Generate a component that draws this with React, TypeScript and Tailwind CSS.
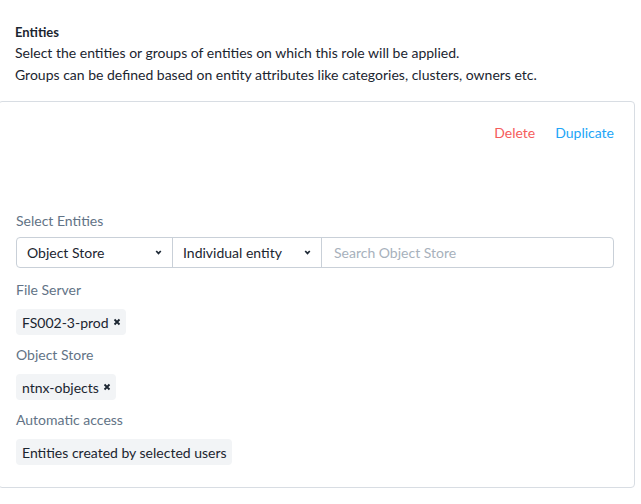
import React from 'react'

const Chevron = () => (
  <svg width='7' height='5' viewBox='0 0 7 5' className='shrink-0'>
    <path d='M1.2 1 L3.5 3.4 L5.8 1' fill='none' stroke='#1f2a37' strokeWidth='1.7' />
  </svg>
)

const Tag = ({ label, removable = true }: { label: string; removable?: boolean }) => (
  <div className='flex'>
    <div className='h-[26px] flex items-center gap-1 pl-[6px] pr-[5px] rounded-[4px] bg-[#f2f4f6] text-[14px] text-[#1b2530]'>
      <span>{label}</span>
      {removable && (
        <svg width='8' height='8' viewBox='0 0 8 8'>
          <path d='M1.5 1.5 L6.5 6.5 M6.5 1.5 L1.5 6.5' stroke='#1b2530' strokeWidth='1.8' />
        </svg>
      )}
    </div>
  </div>
)

const Label = ({ text }: { text: string }) => (
  <div className='text-[14px] leading-5 text-[#627386]'>{text}</div>
)

const App = () => {
  return (
    <div
      className='w-[641px] h-[504px] bg-white overflow-hidden'
      style={{ fontFamily: 'Lato, "Open Sans", sans-serif' }}
    >
      <div className='pl-[15px] pt-[22px]'>
        <div className='text-[13px] leading-5 font-bold text-[#1b2530]'>Entities</div>
        <div className='text-[14px] leading-[22px] text-[#1b2530]'>
          <div>Select the entities or groups of entities on which this role will be applied.</div>
          <div>Groups can be defined based on entity attributes like categories, clusters, owners etc.</div>
        </div>
      </div>

      <div className='mt-[15px] ml-[-2px] mr-[6px] border border-[#d8dde3] rounded-[4px] pl-[17px] pr-5 pt-[21px] pb-[22px] flex flex-col'>
        <div className='flex justify-end gap-5 text-[14px] leading-5'>
          <span className='text-[#f55c5c]'>Delete</span>
          <span className='text-[#22a5f7]'>Duplicate</span>
        </div>

        <div className='mt-[68px]'>
          <Label text='Select Entities' />
        </div>
        <div className='mt-[6px] h-[31px] flex border border-[#c9d0d8] rounded-[4px] text-[14px]'>
          <div className='w-[156px] flex items-center justify-between pl-[10px] pr-[10px] border-r border-[#c9d0d8] text-[#1b2530]'>
            <span>Object Store</span>
            <Chevron />
          </div>
          <div className='w-[149px] flex items-center justify-between pl-[10px] pr-[10px] border-r border-[#c9d0d8] text-[#1b2530]'>
            <span>Individual entity</span>
            <Chevron />
          </div>
          <div className='flex-1 flex items-center pl-3 text-[#a7b1bc]'>Search Object Store</div>
        </div>

        <div className='mt-3'>
          <Label text='File Server' />
        </div>
        <div className='mt-[9px]'>
          <Tag label='FS002-3-prod' />
        </div>

        <div className='mt-[10px]'>
          <Label text='Object Store' />
        </div>
        <div className='mt-[9px]'>
          <Tag label='ntnx-objects' />
        </div>

        <div className='mt-[10px]'>
          <Label text='Automatic access' />
        </div>
        <div className='mt-[9px]'>
          <Tag label='Entities created by selected users' removable={false} />
        </div>
      </div>
    </div>
  )
}

export default App
